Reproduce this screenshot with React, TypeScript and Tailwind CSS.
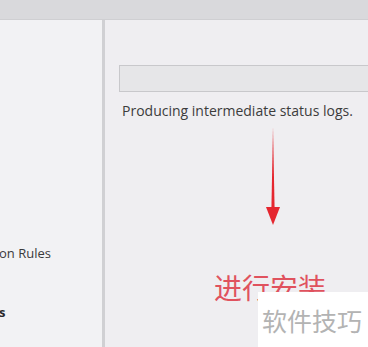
export default function App() {
  return (
    <div className="relative w-[368px] h-[347px] overflow-hidden bg-[#efeef1] font-['Open_Sans',sans-serif]">
      <div className="h-[20px] bg-[#d9d9dc] border-b border-[#cfcfd2]" />
      <div className="flex h-[327px]">
        <div className="w-[102px] bg-[#f2f2f4] flex flex-col">
          <div className="mt-[224px] ml-[-1px] text-[13px] text-[#3a3a3a] leading-[18px]">on Rules</div>
          <div className="mt-[41px] ml-[-1px] text-[13px] font-bold text-[#2a2a2a] leading-[18px]">s</div>
        </div>
        <div className="w-[3px] bg-[#d0d0d3]" />
        <div className="flex-1 pl-[14px] pt-[45px]">
          <div className="h-[27px] bg-[#e6e6e8] border border-[#c8c8cb] border-r-0" />
          <p className="mt-[10px] ml-[3px] text-[14px] text-[#3c3c3c] leading-[18px] whitespace-nowrap">
            Producing intermediate status logs.
          </p>
        </div>
      </div>

      {/* annotation arrow */}
      <svg className="absolute left-[264px] top-[125px]" width="18" height="102" viewBox="0 0 18 102">
        <path d="M9 2 L10.6 84 L7.4 84 Z" fill="#e5262f" />
        <path d="M2 82 L16 82 L9 100 Z" fill="#e5262f" />
      </svg>

      <div className="absolute left-[214px] top-[269px] text-[28px] leading-[36px] text-[#e0525e] font-['Noto_Sans_CJK_SC',sans-serif]">
        进行安装
      </div>

      <div className="absolute left-[258px] top-[292px] w-[110px] h-[55px] bg-white pl-[4px] pt-[12px]">
        <span className="text-[25px] leading-[32px] text-[#b3b3b3] font-['Noto_Sans_CJK_SC',sans-serif] whitespace-nowrap">
          软件技巧
        </span>
      </div>
    </div>
  );
}
